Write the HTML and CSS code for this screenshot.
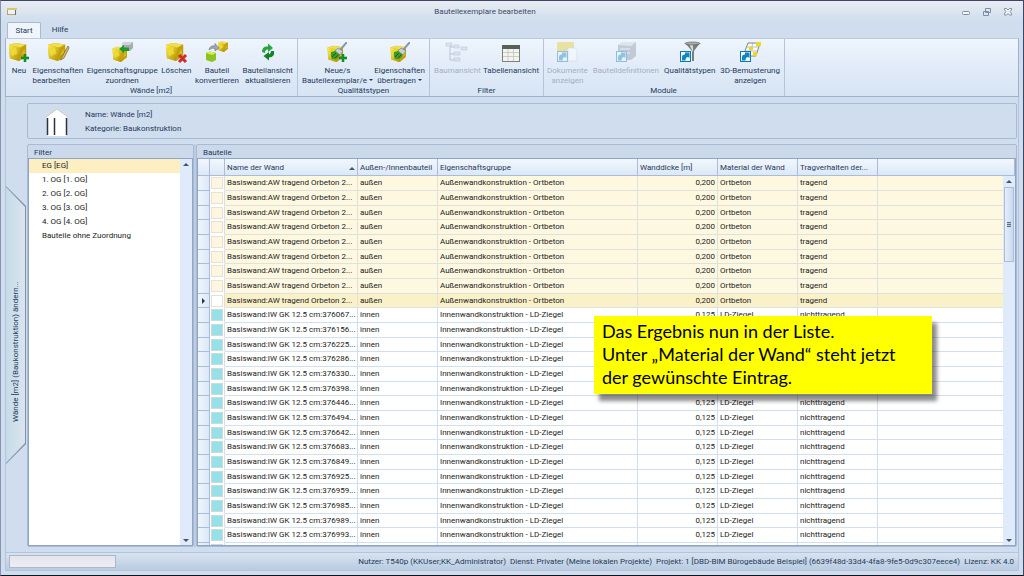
FILE: index.html
```html
<!DOCTYPE html>
<html lang="de">
<head>
    <meta charset="UTF-8">
    <meta name="viewport" content="width=device-width, initial-scale=1.0">
    <title>Bauteilexemplare bearbeiten</title>
    <link rel="stylesheet" href="styles.css">
</head>
<body>
    <!-- Shared icon parts -->
    <svg width="0" height="0" class="defs" aria-hidden="true">
        <defs>
            <linearGradient id="gold" x1="0" y1="0" x2="1" y2="1">
                <stop offset="0" stop-color="#fff04a"/>
                <stop offset="1" stop-color="#b08a00"/>
            </linearGradient>
            <symbol id="cube" viewBox="0 0 20 20">
                <path d="M0 3 L7 1 L18 2.500 L18 14 L10 20 L1 17 Z" fill="#d2b00c"/>
                <path d="M0 3 L7 1 L18 2.500 L12 6 Z" fill="#eede50"/>
                <path d="M0 3 L12 6 L11 20 L1 17 Z" fill="url(#gold)"/>
                <path d="M12 6 L18 2.500 L18 14 L11 20 Z" fill="#c0a010"/>
                <path d="M2 10 L7 5 L9 12 L3 15 Z" fill="#f8e840" opacity=".6"/>
                <path d="M13 14 L16 7 L17 12 Z" fill="#e8c820" opacity=".7"/>
            </symbol>
            <symbol id="plus" viewBox="0 0 8 8">
                <path d="M3 0 H5 V3 H8 V5 H5 V8 H3 V5 H0 V3 H3 Z" fill="#169428" stroke="#0c7a1e" stroke-width=".5"/>
            </symbol>
            <symbol id="brush" viewBox="0 0 20 20">
                <path d="M20 0 L13 8" stroke="#8c98a4" stroke-width="2"/>
                <path d="M11 6 L16 9 L13 13 L8 9 Z" fill="#c8d0d8" stroke="#6c7884" stroke-width=".6"/>
                <path d="M8 9 L13 13 Q11 18 5 17 Q3 14 4 10 Z" fill="#3c9a28"/>
                <path d="M5 15 L9 11 M8 16 L11 13" stroke="#1c6414" stroke-width="1"/>
            </symbol>
            <symbol id="link" viewBox="0 0 11 11">
                <rect x=".5" y=".5" width="10" height="10" fill="#e8f6fc" stroke="#1078ac"/>
                <path d="M2 9.500 V6 Q2 3.500 5 3.500 V1.500 H9.500 V7 L8 6 Q5.500 6 5.500 9.500 Z" fill="#1484bc"/>
            </symbol>
        </defs>
    </svg>

    <div class="window">
        <header class="titlebar">
            <svg class="app-icon" width="10" height="9" viewBox="0 0 10 9"><rect x=".5" y="1.500" width="8" height="6" fill="#eef2f6" stroke="#b8a85c"/><path d="M0 2 H10" stroke="#d8c868" stroke-width="2"/><path d="M8.500 3 V8" stroke="#68707c"/></svg>
            <h1>Bauteilexemplare bearbeiten</h1>
            <div class="window-buttons">
                <button aria-label="Minimieren"><svg width="10" height="10" viewBox="0 0 10 10"><rect x="1.500" y="4.500" width="7" height="3" rx="1" fill="#f4f8fc" stroke="#7c8ea4"/></svg></button>
                <button aria-label="Wiederherstellen"><svg width="10" height="10" viewBox="0 0 10 10"><path d="M3.500 1.500 H8.500 V5.500 H3.500 Z M1.500 4.500 H6.500 V8.500 H1.500 Z" fill="#dce6f0" stroke="#7c8ea4"/></svg></button>
                <button aria-label="Schließen"><svg width="10" height="10" viewBox="0 0 10 10"><path d="M1.500 1.500 H3.500 L5 3 L6.500 1.500 H8.500 V3 L7 4.500 L8.500 6.500 V8 H6.500 L5 6.500 L3.500 8 H1.500 V6.500 L3 4.500 L1.500 3 Z" fill="#f0f4f8" stroke="#7c8ea4"/></svg></button>
            </div>
        </header>

        <nav class="tabs">
            <button class="tab active">Start</button>
            <button class="tab">Hilfe</button>
        </nav>

        <div class="ribbon">
            <section class="group group-walls">
                <div class="tools">
                    <button class="tool">
                        <svg class="icon" viewBox="0 0 20 20"><use href="#cube" width="19" height="19"/><use href="#plus" x="12" y="12" width="8" height="8"/></svg>
                        Neu
                    </button>
                    <button class="tool tool-left">
                        <svg class="icon" viewBox="0 0 20 20"><use href="#cube" width="19" height="19"/><path d="M20 4 L14 15 L12.500 18 L16 16 L21 6 Z" fill="#d8c070" stroke="#786018" stroke-width=".7"/></svg>
                        Eigenschaften<br>bearbeiten
                    </button>
                    <button class="tool">
                        <svg class="icon" viewBox="0 0 20 20"><use href="#cube" y="4" width="17" height="16"/><path d="M10 1 L14 0 H21 V6 L18 9 H10 Z" fill="#a8acb0"/><path d="M10 1 L14 0 H21 L18 3 H10 Z" fill="#d0d2d4"/><path d="M7 7 L12 3 V5.500 H17 V9 H12 V11 Z" fill="#1c9c2c"/></svg>
                        Eigenschaftsgruppe<br>zuordnen
                    </button>
                    <button class="tool">
                        <svg class="icon" viewBox="0 0 20 20"><use href="#cube" width="19" height="19"/><path d="M13 13 L20 20 M20 13 L13 20" stroke="#d02c24" stroke-width="3"/></svg>
                        Löschen
                    </button>
                    <button class="tool">
                        <svg class="icon" viewBox="0 0 20 20"><use href="#cube" x="11" y="-1" width="11" height="11"/><path d="M-1 11 L3 9.500 L9 11 V18 L5 20 L-1 18 Z" fill="#8cc41c"/><path d="M-1 11 L3 9.500 L9 11 L5 13 Z" fill="#d0f060"/><path d="M2 8 Q3 3 8 4 V1.500 L12 6 L8 9 V6.500 Q5 5 2 8 Z" fill="#a0a8b4" stroke="#68707c" stroke-width=".6"/></svg>
                        Bauteil<br>konvertieren
                    </button>
                    <button class="tool">
                        <svg class="icon" viewBox="0 0 20 20"><path d="M4 10 Q4 4 10 4.500 V1.500 L15 6 L10 10 V7.500 Q7 7 7 11 Z" fill="#28a440"/><path d="M16 9 Q17 15 11 15.500 V18.500 L5.500 14 L11 10 V12.500 Q13 12 13 9 Z" fill="#128428"/></svg>
                        Bauteilansicht<br>aktualisieren
                    </button>
                </div>
                <h2>Wände [m2]</h2>
            </section>
            <section class="group group-quality">
                <div class="tools">
                    <button class="tool">
                        <svg class="icon" viewBox="0 0 20 20"><use href="#cube" y="3" width="18" height="17"/><use href="#brush" width="20" height="20"/><use href="#plus" x="12" y="12" width="8" height="8"/></svg>
                        Neue/s<br>Bauteilexemplar/e<span class="caret"></span>
                    </button>
                    <button class="tool">
                        <svg class="icon" viewBox="0 0 20 20"><use href="#cube" y="3" width="18" height="17"/><use href="#brush" width="20" height="20"/></svg>
                        Eigenschaften<br>übertragen<span class="caret"></span>
                    </button>
                </div>
                <h2>Qualitätstypen</h2>
            </section>
            <section class="group group-filter">
                <div class="tools">
                    <button class="tool" disabled>
                        <svg class="icon" viewBox="0 0 20 20"><path d="M3 4 V18 H8 M3 12 H8 M3 5 H8" fill="none" stroke="#78889c"/><path d="M-1 1 H5 V4 H-1 Z M7 3 H12 V6 H7 Z M14 5 H20 V8 H14 Z M7 10 H13 V13 H7 Z M7 16 H13 V19 H7 Z" fill="#c8d0dc" stroke="#78889c" stroke-width=".6"/></svg>
                        Baumansicht
                    </button>
                    <button class="tool">
                        <svg class="icon" viewBox="0 0 20 20"><rect x="1.500" y="4.500" width="17" height="15" fill="#f4f4ee" stroke="#7c8078"/><rect x="1" y="3" width="18" height="4" fill="#586058"/><path d="M7 7 V19 M12.500 7 V19 M2 10.500 H18 M2 14.500 H18" stroke="#b8bcb8" stroke-width=".7"/></svg>
                        Tabellenansicht
                    </button>
                </div>
                <h2>Filter</h2>
            </section>
            <section class="group group-modules">
                <div class="tools">
                    <button class="tool" disabled>
                        <svg class="icon" viewBox="0 0 20 20"><path d="M0 0 H17 V8 H10 V18 H0 Z" fill="#e8c81c"/><path d="M11 6 H18 L20 9 V19 H11 Z" fill="#fff" stroke="#b0b8c0" stroke-width=".6"/><use href="#link" y="9" width="11" height="11"/></svg>
                        Dokumente<br>anzeigen
                    </button>
                    <button class="tool" disabled>
                        <svg class="icon" viewBox="0 0 20 20"><path d="M2 3 L7 0 H20 V14 L15 18 H2 Z" fill="#88929c"/><path d="M2 3 L7 0 H20 L15 4 Z" fill="#c8d0d8"/><path d="M4 7 H14 M4 11 H14" stroke="#e8ecf0"/><use href="#link" y="9" width="11" height="11"/></svg>
                        Bauteildefinitionen
                    </button>
                    <button class="tool">
                        <svg class="icon" viewBox="0 0 20 20"><path d="M5 1 H20 L14 9 V19 H12 V9 Z" fill="#7c8078"/><path d="M9 2 H13 L13 10 Z" fill="#d8dcd8"/><ellipse cx="12.500" cy="1.500" rx="7.500" ry="1.500" fill="#a8aca8" stroke="#505450" stroke-width=".6"/><use href="#link" y="9" width="11" height="11"/></svg>
                        Qualitätstypen
                    </button>
                    <button class="tool">
                        <svg class="icon" viewBox="0 0 20 20"><path d="M8 1 H20 L16 14 H3 Z" fill="#fbfbf8" stroke="#606870" stroke-width=".8"/><path d="M7 5 H18 M5 9 H17 M13 1 L9 14" stroke="#a0a8b0" stroke-width=".7"/><path d="M16 0 H21 V4 H16 Z M9 5 H13 V8 H9 Z M13 10 H17 V14 H13 Z" fill="#f0d81c"/><use href="#link" y="9" width="11" height="11"/></svg>
                        3D-Bemusterung<br>anzeigen
                    </button>
                </div>
                <h2>Module</h2>
            </section>
        </div>

        <main class="workspace">
            <aside class="side">
                <button class="side-tab"><span>Wände [m2] (Baukonstruktion) ändern...</span></button>
            </aside>
            <div class="content">
                <section class="info">
                    <svg width="22" height="27" viewBox="0 0 22 27"><path d="M0 8 L11 0 L22 8 L20 9 V27 H2 V9 Z" fill="#fff"/><path d="M0 8 L11 0 L22 8" fill="none" stroke="#c8c8c8"/><path d="M1.500 9 V26 M8.500 9 V26 M20.500 9 V26" stroke="#303438" stroke-width="1.500"/></svg>
                    <div class="info-text">
                        <p>Name: Wände [m2]</p>
                        <p>Kategorie: Baukonstruktion</p>
                    </div>
                </section>

                <div class="panels">
                    <section class="panel filter-panel">
                        <h2>Filter</h2>
                        <div class="panel-body filter-body">
                            <ul>
                                <li class="selected">EG [EG]</li>
                                <li>1. OG [1. OG]</li>
                                <li>2. OG [2. OG]</li>
                                <li>3. OG [3. OG]</li>
                                <li>4. OG [4. OG]</li>
                                <li>Bauteile ohne Zuordnung</li>
                            </ul>
                            <div class="scrollbar">
                                <span class="arrow-up"></span>
                                <span class="arrow-down"></span>
                            </div>
                        </div>
                    </section>
                    <div class="splitter"></div>
                    <section class="panel parts-panel">
                        <h2>Bauteile</h2>
                        <div class="panel-body parts-body">
                            <table>
                                <colgroup>
                                    <col class="col-marker"><col class="col-color"><col class="col-name"><col class="col-std"><col class="col-group"><col class="col-std"><col class="col-std"><col class="col-std"><col>
                                </colgroup>
                                <thead>
                                    <tr>
                                        <th></th>
                                        <th></th>
                                        <th><div class="sorted">Name der Wand<span class="arrow-up"></span></div></th>
                                        <th>Außen-/Innenbauteil</th>
                                        <th>Eigenschaftsgruppe</th>
                                        <th>Wanddicke [m]</th>
                                        <th>Material der Wand</th>
                                        <th>Tragverhalten der...</th>
                                        <th></th>
                                    </tr>
                                </thead>
                                <tbody id="rows"></tbody>
                            </table>
                            <div class="scrollbar parts-scroll">
                                <span class="arrow-up"></span>
                                <div class="thumb"></div>
                                <span class="arrow-down"></span>
                            </div>
                        </div>
                    </section>
                </div>
            </div>
        </main>

        <footer class="statusbar">
            <div class="progress"></div>
            <span>Nutzer: T540p (KKUser;KK_Administrator)</span>
            <span>Dienst: Privater (Meine lokalen Projekte)</span>
            <span>Projekt: 1 [DBD-BIM Bürogebäude Beispiel] (6639f48d-33d4-4fa8-9fe5-0d9c307eece4)</span>
            <span>Lizenz: KK 4.0</span>
        </footer>
    </div>

    <div class="callout">
        Das Ergebnis nun in der Liste.<br>
        Unter „Material der Wand“ steht jetzt<br>
        der gewünschte Eintrag.
    </div>

    <script src="script.js"></script>
</body>
</html>
```

FILE: styles.css
```css
* {
    box-sizing: border-box;
}

body {
    margin: 0;
    font-family: Roboto, "Open Sans", sans-serif;
    font-size: 8px;
    line-height: 10px;
    color: #1e395b;
}

h1, h2, p, ul {
    margin: 0;
    padding: 0;
    font-size: 8px;
    font-weight: normal;
}

button {
    margin: 0;
    padding: 0;
    border: none;
    background: none;
    font: inherit;
    color: inherit;
}

.defs {
    position: absolute;
}

.window {
    display: flex;
    flex-direction: column;
    height: 100vh;
    padding: 0 4px;
    border: 1px solid #3c4664;
    border-left-color: #8494ac;
    border-bottom-color: #10141c;
    background: #cfddee;
    overflow: hidden;
}

/* Title bar and tabs */
.titlebar {
    display: grid;
    grid-template-columns: 1fr auto 1fr;
    align-items: center;
    height: 21px;
    margin: 0 -4px;
    padding: 0 10px 0 6px;
    background: linear-gradient(#e9ecf2, #cfddee);
}

.titlebar h1 {
    padding-right: 50px;
    color: #3b4b63;
}

.window-buttons {
    display: flex;
    justify-content: flex-end;
    gap: 11px;
}

.window-buttons button,
.window-buttons svg {
    display: block;
    width: 10px;
    height: 10px;
}

.tabs {
    display: flex;
    height: 16px;
    padding-left: 2px;
}

.tab {
    width: 38px;
}

.tab.active {
    width: 34px;
    border: 1px solid #a9bad2;
    border-bottom: none;
    border-radius: 2px 2px 0 0;
    background: #f0f5fc;
}

/* Ribbon */
.ribbon {
    display: flex;
    flex: none;
    height: 59px;
    border: 1px solid #9fb2cc;
    border-top-color: #bccbdf;
    background: linear-gradient(#eef5fd, #e4edf9 40%, #d6e4f4);
}

.group {
    display: flex;
    flex-direction: column;
    justify-content: space-between;
    padding: 3px 4px 0;
    border-right: 1px solid #b4c4da;
}

.group-walls {
    width: 292px;
    padding-left: 3px;
}

.group-quality {
    width: 132px;
}

.group-filter {
    width: 114px;
}

.group-modules {
    width: 241px;
    padding-left: 3px;
}

.tools {
    display: flex;
    justify-content: space-between;
    align-items: flex-start;
}

.tool {
    display: flow-root;
    min-width: 20px;
    white-space: nowrap;
    text-align: center;
}

.tool-left {
    text-align: left;
}

.tool:disabled {
    color: #a3b0c2;
}

.tool:disabled .icon {
    opacity: .4;
}

.icon {
    display: block;
    width: 20px;
    height: 20px;
    margin: 0 auto 4px;
    overflow: visible;
}

.caret {
    display: inline-block;
    margin: 0 0 2px 2px;
    border: 2px solid transparent;
    border-top-color: #1e395b;
    border-bottom: none;
}

.group h2 {
    line-height: 8px;
    padding-bottom: 1px;
    text-align: center;
}

/* Work area */
.workspace {
    display: flex;
    flex: 1;
    min-height: 0;
    border: 1px solid #b4c4da;
    border-top: none;
    border-bottom: none;
}

.side {
    flex: none;
    width: 21px;
    padding-top: 89px;
}

.side-tab {
    width: 20px;
    height: 278px;
    background: #7c90ac;
    clip-path: polygon(0 0, 100% 20px, 100% 258px, 0 100%);
}

/* turned by 180deg, so left and right are swapped here */
.side-tab span {
    display: flex;
    align-items: center;
    width: 19px;
    height: 276px;
    padding-top: 41px;
    background: linear-gradient(to left, #c4dce8, #dce4ee);
    clip-path: polygon(0 20px, 100% 0, 100% 100%, 0 256px);
    writing-mode: vertical-rl;
    transform: rotate(180deg);
}

.content {
    display: flex;
    flex-direction: column;
    flex: 1;
    min-width: 0;
    padding: 6px 1px 5px 0;
}

.info {
    display: flex;
    align-items: center;
    flex: none;
    gap: 17px;
    height: 36px;
    margin-bottom: 5px;
    padding: 2px 0 0 18px;
    border: 1px solid #a9bad2;
    border-radius: 2px;
}

.info-text {
    display: grid;
    gap: 4px;
}

.panels {
    display: flex;
    flex: 1;
    min-height: 0;
}

.panel {
    display: flex;
    flex-direction: column;
    border: 1px solid #a9bad2;
    border-radius: 2px;
    background: #cbd9ea;
}

.panel h2 {
    flex: none;
    height: 13px;
    padding: 3px 6px 0;
}

.panel-body {
    position: relative;
    flex: 1;
    min-height: 0;
    overflow: hidden;
    border: 1px solid #8da5c6;
    background: #fff;
}

.filter-panel {
    flex: none;
    width: 167px;
}

.filter-body {
    display: flex;
}

.filter-body ul {
    flex: 1;
    list-style: none;
    color: #222;
}

.filter-body li {
    height: 14px;
    padding-left: 13px;
    line-height: 14px;
}

.filter-body li.selected {
    background: #feefc3;
}

.splitter {
    flex: none;
    width: 2px;
    background: #bccce2;
}

.parts-panel {
    flex: 1;
    min-width: 0;
}

.scrollbar {
    display: flex;
    flex-direction: column;
    align-items: center;
    width: 12px;
    padding: 4px 0 3px;
    background: #dfeafa;
}

.arrow-up,
.arrow-down {
    border: 3px solid transparent;
}

.arrow-up {
    border-top: none;
    border-bottom-color: #3f5573;
}

.arrow-down {
    margin-top: auto;
    border-bottom: none;
    border-top-color: #3f5573;
}

.parts-scroll {
    position: absolute;
    top: 17px;
    right: 0;
    bottom: 0;
}

.thumb {
    display: grid;
    place-items: center;
    width: 10px;
    height: 75px;
    margin-top: 4px;
    border: 1px solid #a9bddb;
    background: linear-gradient(to right, #e6effa, #c8d8ec);
}

.thumb::before {
    content: "";
    width: 4px;
    height: 5px;
    background: repeating-linear-gradient(#5c7090 0 1px, #b8c8dc 1px 2px);
}

/* Table */
table {
    width: 100%;
    table-layout: fixed;
    border-collapse: separate;
    border-spacing: 0;
}

.col-marker {
    width: 12px;
}

.col-color {
    width: 15px;
}

.col-name {
    width: 133px;
}

.col-std {
    width: 80px;
}

.col-group {
    width: 200px;
}

th,
td {
    padding: 0 2px;
    overflow: hidden;
    white-space: nowrap;
    text-align: left;
    font-weight: normal;
    border-right: 1px solid #d3dfec;
    border-bottom: 1px solid #d3dfec;
}

th {
    height: 17px;
    padding-top: 2px;
    border-color: #a9bddb;
    background: linear-gradient(#f2f7fd, #dce8f7);
}

.sorted {
    display: flex;
    justify-content: space-between;
    align-items: center;
}

td {
    height: 15px;
    color: #222;
}

tr:nth-child(3n) td {
    height: 14px;
}

td.marker {
    padding: 0 0 0 4px;
    border-color: #a9bddb;
    background: linear-gradient(to right, #f0f5fc, #dce8f7);
}

td.marker span {
    display: block;
    width: 0;
    border: 3px solid transparent;
    border-left-color: #1e395b;
    border-right: none;
}

td.color {
    padding: 0 1px;
    border-bottom-color: #fff;
}

td.color span {
    display: block;
    height: 12px;
    border: 1px solid #c8dcdc;
    background: #98e0e8;
}

td.number {
    text-align: right;
}

.outer td:not(.marker, .color) {
    background: #fef8e0;
    border-color: #dfe1dc;
}

.outer td.color span {
    border-color: #e8e0d4;
    background: #fef6de;
}

.outer.current td:not(.marker, .color) {
    background: #fbf1c8;
}

.outer.current td.color span {
    background: #fff;
}

/* Status bar */
.statusbar {
    display: flex;
    align-items: center;
    flex: none;
    gap: 4px;
    height: 19px;
    margin-bottom: 4px;
    padding: 0 4px 0 3px;
    border: 1px solid #b4c4da;
    background: linear-gradient(#d8e3f1, #b9cbe0);
}

.progress {
    width: 107px;
    height: 13px;
    margin-right: auto;
    border: 1px solid #a9b8cc;
    background: linear-gradient(#e4e6ec, #eceef2);
}

/* Note on top of the window */
.callout {
    position: absolute;
    top: 316px;
    left: 594px;
    width: 338px;
    padding: 4px 8px 5px;
    background: #ffff00;
    box-shadow: 5px 7px 4px rgba(0, 0, 0, .45);
    font-family: Lato, sans-serif;
    font-size: 18px;
    line-height: 23px;
    color: #000;
}
```

FILE: script.js
```javascript
const innerWalls = [
    '376067', '376156', '376225', '376286', '376330', '376398', '376446', '376494',
    '376642', '376683', '376849', '376925', '376959', '376985', '376989', '376993', ''
];

const rows = [];
for (let i = 0; i < 9; i++) {
    rows.push({
        type: i === 8 ? 'outer current' : 'outer',
        cells: ['Basiswand:AW tragend Orbeton 2...', 'außen', 'Außenwandkonstruktion - Ortbeton', '0,200', 'Ortbeton', 'tragend']
    });
}
innerWalls.forEach(id => {
    rows.push({
        type: 'inner',
        cells: id ? [`Basiswand:IW GK 12.5 cm:${id}...`, 'innen', 'Innenwandkonstruktion - LD-Ziegel', '0,125', 'LD-Ziegel', 'nichttragend'] : ['', '', '', '', '', '']
    });
});

document.getElementById('rows').innerHTML = rows.map(row => `
    <tr class="${row.type}">
        <td class="marker">${row.type.includes('current') ? '<span></span>' : ''}</td>
        <td class="color"><span></span></td>
        ${row.cells.map((text, i) => `<td${i === 3 ? ' class="number"' : ''}>${text}</td>`).join('')}
        <td></td>
    </tr>`).join('');
```
